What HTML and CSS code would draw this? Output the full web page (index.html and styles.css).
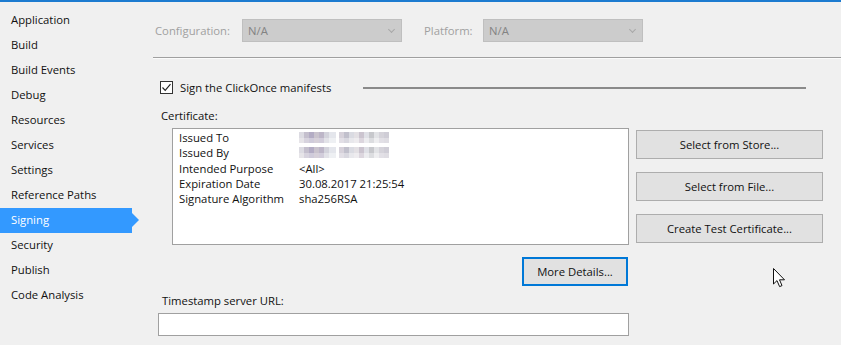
FILE: index.html
```html
<!DOCTYPE html>
<html lang="en">
<head>
  <meta charset="UTF-8">
  <meta name="viewport" content="width=device-width, initial-scale=1.0">
  <title>Project Properties - Signing</title>
  <link rel="stylesheet" href="styles.css">
</head>
<body>
  <div class="page">
    <!-- Property tabs -->
    <nav class="sidebar">
      <ul>
        <li>Application</li>
        <li>Build</li>
        <li>Build Events</li>
        <li>Debug</li>
        <li>Resources</li>
        <li>Services</li>
        <li>Settings</li>
        <li>Reference Paths</li>
        <li class="active">Signing</li>
        <li>Security</li>
        <li>Publish</li>
        <li>Code Analysis</li>
      </ul>
    </nav>

    <!-- Signing page -->
    <main class="content">
      <div class="config-row">
        <span class="config-label">Configuration:</span>
        <div class="combo">N/A<span class="chevron"></span></div>
        <span class="platform-label">Platform:</span>
        <div class="combo">N/A<span class="chevron"></span></div>
      </div>

      <div class="separator"></div>

      <div class="sign-row">
        <span class="checkbox">
          <svg width="11" height="11" viewBox="0 0 11 11"><path d="M1.5 5.5 L4.2 8.3 L9.5 2.2" fill="none" stroke="#222" stroke-width="1.2"/></svg>
        </span>
        <span class="sign-label">Sign the ClickOnce manifests</span>
        <span class="sign-line"></span>
      </div>

      <div class="cert-label">Certificate:</div>

      <div class="cert-row">
        <div class="cert-box">
          <div class="cert-item"><span class="cert-key">Issued To</span><span class="blur"></span></div>
          <div class="cert-item"><span class="cert-key">Issued By</span><span class="blur"></span></div>
          <div class="cert-item"><span class="cert-key">Intended Purpose</span><span>&lt;All&gt;</span></div>
          <div class="cert-item"><span class="cert-key">Expiration Date</span><span>30.08.2017 21:25:54</span></div>
          <div class="cert-item"><span class="cert-key">Signature Algorithm</span><span>sha256RSA</span></div>
        </div>
        <div class="cert-buttons">
          <button class="btn">Select from Store...</button>
          <button class="btn">Select from File...</button>
          <button class="btn">Create Test Certificate...</button>
        </div>
      </div>

      <div class="details-row">
        <button class="btn btn-focus">More Details...</button>
      </div>

      <div class="timestamp-label">Timestamp server URL:</div>
      <input class="timestamp-input" type="text">
    </main>
  </div>

  <!-- mouse pointer -->
  <svg class="cursor" width="13" height="20" viewBox="0 0 13 20">
    <path d="M0.5 0.5 L0.5 16 L4 12.6 L6.6 18.6 L9 17.6 L6.5 11.8 L11.5 11.8 Z" fill="#fff" stroke="#111" stroke-width="1" stroke-linejoin="miter"/>
  </svg>
</body>
</html>
```

FILE: styles.css
```css
/* Global Styles */
* {
  margin: 0;
  padding: 0;
  box-sizing: border-box;
}

body {
  background-color: #f0f0f0;
  color: #111;
  font-family: 'Open Sans', 'Noto Sans', sans-serif;
  font-size: 11.3px;
  border-top: 2px solid #1c7bd0;
  height: 345px;
  overflow: hidden;
}

.page {
  display: flex;
}

/* Sidebar */
.sidebar {
  width: 153px;
  flex-shrink: 0;
  padding-top: 6px;
}

.sidebar ul {
  list-style: none;
}

.sidebar li {
  height: 25px;
  line-height: 24px;
  padding-left: 11px;
  width: 132px;
  position: relative;
}

.sidebar li.active {
  background-color: #3399ff;
  color: #fff;
}

.sidebar li.active::after {
  content: '';
  position: absolute;
  right: -7px;
  top: 5px;
  border-top: 7px solid transparent;
  border-bottom: 7px solid transparent;
  border-left: 7px solid #3399ff;
}

/* Content */
.content {
  flex: 1;
  padding-top: 17px;
}

.config-row {
  display: flex;
  align-items: center;
  height: 23px;
  margin-left: 2px;
  color: #a0a0a0;
}

.config-label {
  width: 87px;
}

.platform-label {
  width: 59px;
  margin-left: 22px;
}

.combo {
  width: 160px;
  height: 23px;
  line-height: 21px;
  background-color: #cccccc;
  border: 1px solid #bfbfbf;
  color: #838383;
  padding-left: 5px;
  position: relative;
}

.chevron {
  position: absolute;
  right: 7px;
  top: 7px;
  width: 5px;
  height: 5px;
  border-right: 1px solid #a8a8a8;
  border-bottom: 1px solid #a8a8a8;
  transform: rotate(45deg);
}

.separator {
  margin-top: 15px;
  border-top: 1px solid #a0a0a0;
  border-bottom: 1px solid #fbfbfb;
}

/* Sign checkbox row */
.sign-row {
  display: flex;
  align-items: center;
  margin-top: 22px;
  margin-left: 7px;
  height: 13px;
}

.checkbox {
  width: 13px;
  height: 13px;
  border: 1px solid #333;
  background-color: #fff;
  display: flex;
  align-items: center;
  justify-content: center;
}

.sign-label {
  margin-left: 7px;
  width: 155px;
  white-space: nowrap;
}

.sign-line {
  margin-left: 28px;
  width: 443px;
  height: 2px;
  background-color: #8a8a8a;
}

.cert-label {
  margin-top: 14px;
  margin-left: 8px;
  line-height: 16px;
}

/* Certificate box */
.cert-row {
  display: flex;
  margin-top: 4px;
  margin-left: 19px;
}

.cert-box {
  width: 457px;
  height: 117px;
  background-color: #fff;
  border: 1px solid #a0a0a0;
  padding: 1px 6px 0;
}

.cert-item {
  display: flex;
  align-items: center;
  height: 15.25px;
}

.cert-key {
  width: 120px;
  flex-shrink: 0;
}

.blur {
  width: 90px;
  height: 11px;
  background:
    linear-gradient(to right, #dcdbe2 0 5px, #c4bfcd 5px 10px, #b3acc4 10px 15px, #c9c3cd 15px 20px, #bdb6c8 20px 25px, #d3d3dc 25px 30px, #e4e6ec 30px 37px, #fff 37px 40px, #d6d1da 40px 45px, #c1c0cc 45px 50px, #dadbe2 50px 55px, #e3e0e4 55px 60px, #cbc4cf 60px 65px, #dfe0e6 65px 70px, #c7c8cc 70px 75px, #e2e3e6 75px 80px, #d5d3da 80px 85px, #cfcdd6 85px 90px) top / 100% 6px no-repeat,
    linear-gradient(to right, #e6e4e8 0 5px, #d7d3de 5px 10px, #cfcbda 10px 15px, #d6d0d9 15px 20px, #d2cddb 20px 25px, #e2e2e8 25px 30px, #eef0f3 30px 37px, #fff 37px 40px, #e2dfe6 40px 45px, #d9d8e0 45px 50px, #e8e8ec 50px 55px, #eeecef 55px 60px, #dcd6de 60px 65px, #ececef 65px 70px, #dcdde0 70px 75px, #eeeef0 75px 80px, #e2e0e6 80px 85px, #dfdde3 85px 90px) bottom / 100% 5px no-repeat;
}

.cert-buttons {
  display: flex;
  flex-direction: column;
  gap: 13px;
  margin-left: 7px;
  padding-top: 2px;
}

.btn {
  width: 187px;
  height: 29px;
  background-color: #e1e1e1;
  border: 1px solid #adadad;
  font-family: inherit;
  font-size: 11.3px;
  color: #111;
}

.btn-focus {
  width: 106px;
  border: 2px solid #0078d7;
}

.details-row {
  width: 476px;
  display: flex;
  justify-content: flex-end;
  margin-top: 12px;
  padding-right: 1px;
}

.timestamp-label {
  margin-top: 7px;
  margin-left: 9px;
  line-height: 16px;
}

.timestamp-input {
  display: block;
  margin-top: 4px;
  margin-left: 5px;
  width: 471px;
  height: 23px;
  border: 1px solid #a0a0a0;
  background-color: #fff;
}

.cursor {
  position: absolute;
  left: 773px;
  top: 268px;
}
```
